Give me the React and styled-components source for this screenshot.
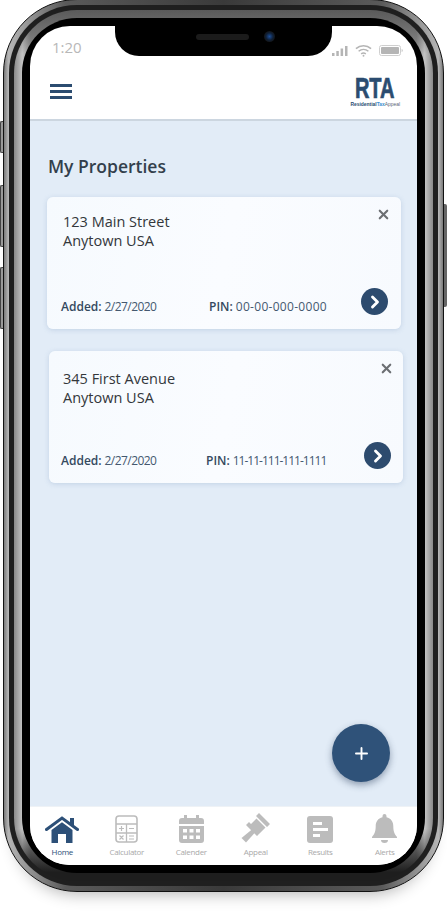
import React from 'react';
import styled, { createGlobalStyle } from 'styled-components';
import { ChevronRight, Plus, X } from 'lucide-react';

const GlobalStyle = createGlobalStyle`
  html, body {
    margin: 0;
    padding: 0;
    width: 447px;
    height: 915px;
    overflow: hidden;
    background: #ffffff;
    font-family: "Open Sans", "Noto Sans", sans-serif;
  }
`;

const properties = [
  { id: 1, line1: '123 Main Street', line2: 'Anytown USA', added: '2/27/2020', pin: '00-00-000-0000', shift: 17, pad: 14, padRight: 13, top: 15, addedWidth: 148, pinGap: 3, pinTrack: 0.3 },
  { id: 2, line1: '345 First Avenue', line2: 'Anytown USA', added: '2/27/2020', pin: '11-11-111-111-1111', shift: 19, pad: 12, padRight: 12, top: 18, addedWidth: 145, pinGap: 3, pinTrack: -1 },
];

const HomeIcon = () => (
  <svg width="34" height="27" viewBox="0 0 34 27">
    <path d="M25 2h4v8h-4z" fill="#2d5078" />
    <path d="M1.500 13.500 17 2l15.500 11.500" fill="none" stroke="#2d5078" strokeWidth="3" strokeLinecap="round" />
    <path d="M6.500 14 17 6.200 27.500 14v13H21v-9h-8v9H6.500z" fill="#2d5078" />
  </svg>
);

const CalculatorIcon = () => (
  <svg width="23" height="28" viewBox="0 0 23 28">
    <g fill="none" stroke="#bcbcbc">
      <rect x="1" y="1" width="21" height="26" rx="3" strokeWidth="1.6" />
      <path d="M1 9h21M1 18h21M11.500 9v18" strokeWidth="1.3" />
      <path d="M4 13.500h5M6.500 11v5M14 13.500h5M4.500 20.500l4 4M8.500 20.500l-4 4M14 21h5M14 24h5" strokeWidth="1.2" />
    </g>
  </svg>
);

const CalendarIcon = () => (
  <svg width="25" height="28" viewBox="0 0 25 28">
    <path d="M5 0h3v4H5zM17 0h3v4h-3z" fill="#bcbcbc" />
    <path d="M3 3h19a3 3 0 0 1 3 3v3H0V6a3 3 0 0 1 3-3zM0 11h25v14a3 3 0 0 1-3 3H3a3 3 0 0 1-3-3z" fill="#bcbcbc" />
    <path d="M4 14h4v3.500H4zM10.500 14h4v3.500h-4zM17 14h4v3.500h-4zM4 20.500h4V24H4zM10.500 20.500h4V24h-4zM17 20.500h4V24h-4z" fill="#ffffff" />
  </svg>
);

const GavelIcon = () => (
  <svg width="30" height="30" viewBox="0 0 30 30">
    <path d="M18 0l11 11-3 3L15 3zM15.500 5.500l9 9-6 6-9-9zM8 9l11 11-3 3L5 12z" fill="#bcbcbc" />
    <path d="M11.500 16 14.500 19 5 29.500 0.500 25z" fill="#bcbcbc" />
  </svg>
);

const ResultsIcon = () => (
  <svg width="26" height="27" viewBox="0 0 26 27">
    <rect width="26" height="27" rx="3" fill="#bcbcbc" />
    <path d="M6 6h9v3H6zM6 12h15v3H6zM6 18h7v3H6z" fill="#ffffff" />
  </svg>
);

const BellIcon = () => (
  <svg width="25" height="29" viewBox="0 0 25 29">
    <path d="M12.500 0a2 2 0 0 1 2 2v1.200c4.500 1 6.800 4.500 6.800 9 0 5 1 7.500 3.700 10.800v1H0v-1c2.700-3.300 3.700-5.800 3.700-10.800 0-4.500 2.300-8 6.800-9V2a2 2 0 0 1 2-2z" fill="#bcbcbc" />
    <path d="M9 26h7a3.500 3 0 0 1-7 0z" fill="#bcbcbc" />
  </svg>
);

const tabs = [
  { label: 'Home', icon: <HomeIcon />, active: true },
  { label: 'Calculator', icon: <CalculatorIcon /> },
  { label: 'Calender', icon: <CalendarIcon /> },
  { label: 'Appeal', icon: <GavelIcon /> },
  { label: 'Results', icon: <ResultsIcon /> },
  { label: 'Alerts', icon: <BellIcon /> },
];

const App = () => {
  return (
    <React.Fragment>
      <GlobalStyle />
      <Page>
        <Phone>
          <SideKey $top={122} $height={32} />
          <SideKey $top={186} $height={62} />
          <SideKey $top={268} $height={62} />
          <PowerKey />
          <Chrome>
            <DarkBand>
              <SteelBand>
                <BlackBezel>
                  <Screen>
                    <Notch>
                      <Speaker />
                      <Camera />
                    </Notch>
                    <TopArea>
                      <StatusBar>
                        <Time>1:20</Time>
                        <StatusIcons>
                          <svg width="16" height="10" viewBox="0 0 16 10">
                            <path d="M0 7h2.500v3H0zM4.300 5h2.500v5H4.300zM8.600 2.500h2.500V10H8.600zM13 0h2.500v10H13z" fill="#b5b5b5" />
                          </svg>
                          <svg width="17" height="13" viewBox="0 0 18 13">
                            <path d="M1 4.500C5.500.5 12.500.5 17 4.500M3.800 7.300c3-2.500 7.400-2.500 10.400 0M6.500 10c1.500-1 3.500-1 5 0" fill="none" stroke="#b5b5b5" strokeWidth="1.600" />
                            <circle cx="9" cy="12" r="1" fill="#b5b5b5" />
                          </svg>
                          <svg width="24" height="11" viewBox="0 0 24 11">
                            <rect x="0.500" y="0.500" width="21" height="10" rx="2" fill="#ffffff" stroke="#cfcfcf" />
                            <rect x="2" y="2" width="18" height="7" rx="1" fill="#b5b5b5" />
                            <path d="M22.500 4v3c1-.2 1.500-.8 1.500-1.500S23.500 4.200 22.500 4z" fill="#d5d5d5" />
                          </svg>
                        </StatusIcons>
                      </StatusBar>
                      <Header>
                        <Burger>
                          <BurgerLine />
                          <BurgerLine />
                          <BurgerLine />
                        </Burger>
                        <Logo>
                          <LogoMark>RTA</LogoMark>
                          <LogoLine>
                            Residential<LogoTax>Tax</LogoTax><LogoAppeal>Appeal</LogoAppeal>
                          </LogoLine>
                        </Logo>
                      </Header>
                    </TopArea>
                    <Main>
                      <Title>My Properties</Title>
                      <CardList>
                        {properties.map((p) => (
                          <Card key={p.id} $shift={p.shift} $pad={p.pad} $padRight={p.padRight}>
                            <CardTop>
                              <Address $top={p.top}>
                                {p.line1}
                                <br />
                                {p.line2}
                              </Address>
                              <CloseButton>
                                <X size={15} strokeWidth={3.4} color="#6c6f73" />
                              </CloseButton>
                            </CardTop>
                            <CardFooter>
                              <Meta $width={p.addedWidth} $gap={3}>
                                <MetaLabel>Added:</MetaLabel>
                                <MetaValue $track={-0.55}>{p.added}</MetaValue>
                              </Meta>
                              <Meta $gap={p.pinGap}>
                                <MetaLabel>PIN:</MetaLabel>
                                <MetaValue $track={p.pinTrack}>{p.pin}</MetaValue>
                              </Meta>
                              <GoButton>
                                <ChevronRight size={20} strokeWidth={3.4} color="#ffffff" />
                              </GoButton>
                            </CardFooter>
                          </Card>
                        ))}
                      </CardList>
                      <Fab>
                        <Plus size={19} strokeWidth={2.4} color="#ffffff" />
                      </Fab>
                    </Main>
                    <TabBar>
                      {tabs.map((t) => (
                        <Tab key={t.label}>
                          <TabIcon>{t.icon}</TabIcon>
                          <TabLabel $active={t.active}>{t.label}</TabLabel>
                        </Tab>
                      ))}
                    </TabBar>
                  </Screen>
                </BlackBezel>
              </SteelBand>
            </DarkBand>
          </Chrome>
        </Phone>
      </Page>
    </React.Fragment>
  );
};

const Page = styled.div`
  width: 447px;
  height: 915px;
  padding-left: 3px;
  box-sizing: border-box;
  overflow: hidden;
`;

const Phone = styled.div`
  position: relative;
  width: 441px;
  height: 893px;
  margin-top: -1px;
  border-radius: 74px;
  box-shadow: 0 14px 16px -12px rgba(0, 0, 0, 0.3);
`;

const SideKey = styled.div`
  position: absolute;
  left: -3px;
  top: ${(props) => props.$top}px;
  width: 3px;
  height: ${(props) => props.$height}px;
  background: #9a9a9a;
  border: 1px solid #444444;
  border-right: 0;
  box-sizing: border-box;
  border-radius: 2px 0 0 2px;
`;

const PowerKey = styled.div`
  position: absolute;
  right: -3px;
  top: 205px;
  width: 3px;
  height: 103px;
  background: #666666;
  border-radius: 0 2px 2px 0;
`;

const Chrome = styled.div`
  height: 100%;
  box-sizing: border-box;
  padding: 5px;
  border: 1px solid #111111;
  border-radius: 74px;
  background: linear-gradient(90deg, #7a7a7a, #b5b5b5 1%, #5a5a5a 14%, #3a3a3a 50%, #5a5a5a 86%, #b5b5b5 99%, #7a7a7a);
`;

const DarkBand = styled.div`
  height: 100%;
  box-sizing: border-box;
  padding: 5px;
  border-radius: 68px;
  background: #1f1f1f;
`;

const SteelBand = styled.div`
  height: 100%;
  box-sizing: border-box;
  padding: 8px;
  border-radius: 63px;
  background:
    linear-gradient(180deg, #5a5a5a, rgba(40, 40, 40, 0) 5%, rgba(40, 40, 40, 0) 94%, #1e1e1e 99%),
    linear-gradient(90deg, #8a8a8a, #c4c4c4 2%, #8a8a8a 4%, #8a8a8a 96%, #c4c4c4 98%, #8a8a8a);
`;

const BlackBezel = styled.div`
  height: 100%;
  box-sizing: border-box;
  padding: 8px;
  border-radius: 55px;
  background: #000000;
`;

const Screen = styled.div`
  position: relative;
  display: flex;
  flex-direction: column;
  height: 100%;
  border-radius: 40px;
  overflow: hidden;
  background: #ffffff;
`;

const Notch = styled.div`
  position: absolute;
  top: 0;
  left: 85px;
  width: 217px;
  height: 30px;
  display: flex;
  align-items: center;
  justify-content: center;
  gap: 15px;
  padding-bottom: 9px;
  box-sizing: border-box;
  background: #000000;
  border-radius: 0 0 24px 24px;
`;

const Speaker = styled.div`
  width: 53px;
  height: 6px;
  margin-left: 24px;
  border-radius: 3px;
  background: #1b1b1b;
`;

const Camera = styled.div`
  width: 11px;
  height: 11px;
  border-radius: 50%;
  background: radial-gradient(circle, #1d4f9a 0, #0f2038 45%, #141414 75%);
`;

const TopArea = styled.div`
  flex: none;
  height: 95px;
  box-sizing: border-box;
  border-bottom: 2px solid #ccd6e0;
`;

const StatusBar = styled.div`
  display: flex;
  align-items: center;
  justify-content: space-between;
  height: 41px;
  padding: 0 14px 0 22px;
`;

const Time = styled.span`
  font-size: 15px;
  color: #b8b8b8;
`;

const StatusIcons = styled.div`
  display: flex;
  align-items: center;
  gap: 7px;
  padding-top: 8px;
`;

const Header = styled.div`
  display: flex;
  align-items: flex-start;
  justify-content: space-between;
  padding: 9px 17px 0 20px;
`;

const Burger = styled.div`
  display: flex;
  flex-direction: column;
  gap: 3.5px;
  padding-top: 8px;
`;

const BurgerLine = styled.span`
  display: block;
  width: 22px;
  height: 2.5px;
  background: #2b4c70;
`;

const Logo = styled.div`
  display: flex;
  flex-direction: column;
  align-items: center;
  width: 50px;
  font-family: "Liberation Sans", sans-serif;
  font-weight: 700;
  color: #2b4c70;
  white-space: nowrap;
`;

const LogoMark = styled.span`
  display: block;
  font-size: 29px;
  line-height: 24px;
  transform: scaleX(0.69);
  -webkit-text-stroke: 0.7px #2b4c70;
`;

const LogoLine = styled.span`
  display: block;
  font-size: 6px;
  line-height: 8px;
  transform: scaleX(0.82);
`;

const LogoTax = styled.span`
  color: #3f8fd0;
`;

const LogoAppeal = styled.span`
  color: #5a6675;
  font-weight: 400;
`;

const Main = styled.div`
  position: relative;
  flex: 1;
  background: #e2ecf7;
`;

const Title = styled.h1`
  margin: 33px 0 19px 18px;
  font-size: 17.5px;
  line-height: 24px;
  font-weight: 600;
  color: #333f4c;
`;

const CardList = styled.div`
  display: flex;
  flex-direction: column;
  gap: 22px;
`;

const Card = styled.div`
  display: flex;
  flex-direction: column;
  justify-content: space-between;
  width: 354px;
  height: 132px;
  box-sizing: border-box;
  margin-left: ${(props) => props.$shift}px;
  padding: 0 ${(props) => props.$padRight}px 14px ${(props) => props.$pad}px;
  border-radius: 6px;
  background: linear-gradient(100deg, #f6fafe, #fafcff 50%, #f7fafe);
  box-shadow: 0 1px 5px rgba(120, 150, 190, 0.3);
`;

const CardTop = styled.div`
  display: flex;
  justify-content: space-between;
  align-items: flex-start;
`;

const Address = styled.div`
  margin: ${(props) => props.$top}px 0 0 2px;
  font-size: 14.5px;
  line-height: 19px;
  color: #33373b;
`;

const CloseButton = styled.div`
  display: flex;
  margin: 10px -3px 0 0;
`;

const CardFooter = styled.div`
  display: flex;
  align-items: center;
`;

const Meta = styled.div`
  display: flex;
  gap: ${(props) => props.$gap}px;
  width: ${(props) => (props.$width ? `${props.$width}px` : 'auto')};
  font-size: 12px;
  line-height: 16px;
  padding-top: 10px;
`;

const MetaLabel = styled.span`
  font-weight: 600;
  color: #34495e;
`;

const MetaValue = styled.span`
  color: #44586f;
  letter-spacing: ${(props) => props.$track || 0}px;
`;

const GoButton = styled.div`
  display: flex;
  align-items: center;
  justify-content: center;
  width: 27px;
  height: 27px;
  margin-left: auto;
  border-radius: 50%;
  background: #2d4b6e;
`;

const Fab = styled.div`
  position: absolute;
  left: 302px;
  bottom: 24px;
  display: flex;
  align-items: center;
  justify-content: center;
  width: 58px;
  height: 58px;
  border-radius: 50%;
  background: #2f5279;
  box-shadow: 0 3px 7px rgba(40, 60, 90, 0.45);
`;

const TabBar = styled.nav`
  flex: none;
  display: grid;
  grid-template-columns: repeat(6, 1fr);
  height: 59px;
  background: #ffffff;
  border-top: 1px solid #eef2f6;
  box-sizing: border-box;
`;

const Tab = styled.div`
  display: flex;
  flex-direction: column;
  align-items: center;
`;

const TabIcon = styled.div`
  display: flex;
  align-items: flex-end;
  justify-content: center;
  height: 36px;
`;

const TabLabel = styled.span`
  margin-top: 3px;
  font-size: 8px;
  line-height: 12px;
  letter-spacing: -0.3px;
  color: ${(props) => (props.$active ? '#2d5078' : '#a9a9a9')};
`;

export default App;
